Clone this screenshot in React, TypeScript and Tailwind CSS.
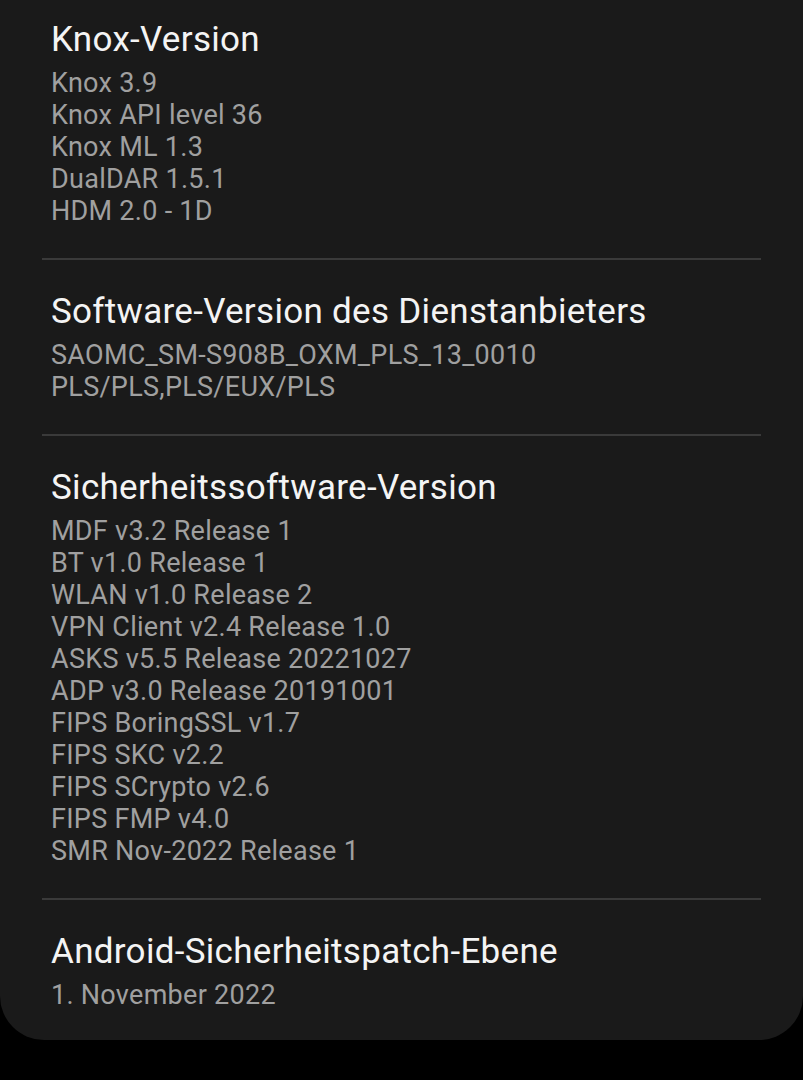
import React from "react";

const sections: { title: string; lines: string[] }[] = [
  {
    title: "Knox-Version",
    lines: ["Knox 3.9", "Knox API level 36", "Knox ML 1.3", "DualDAR 1.5.1", "HDM 2.0 - 1D"],
  },
  {
    title: "Software-Version des Dienstanbieters",
    lines: ["SAOMC_SM-S908B_OXM_PLS_13_0010", "PLS/PLS,PLS/EUX/PLS"],
  },
  {
    title: "Sicherheitssoftware-Version",
    lines: [
      "MDF v3.2 Release 1",
      "BT v1.0 Release 1",
      "WLAN v1.0 Release 2",
      "VPN Client v2.4 Release 1.0",
      "ASKS v5.5 Release 20221027",
      "ADP v3.0 Release 20191001",
      "FIPS BoringSSL v1.7",
      "FIPS SKC v2.2",
      "FIPS SCrypto v2.6",
      "FIPS FMP v4.0",
      "SMR Nov-2022 Release 1",
    ],
  },
  {
    title: "Android-Sicherheitspatch-Ebene",
    lines: ["1. November 2022"],
  },
];

export default function App() {
  return (
    <div className="w-[803px] h-[1080px] bg-black" style={{ fontFamily: "Roboto, 'Noto Sans', sans-serif" }}>
      <div className="bg-[#1a1a1a] rounded-b-[44px] flex flex-col">
        {sections.map((s, i) => (
          <div key={s.title} className="flex flex-col">
            {i > 0 && <div className="mx-[42px] h-[2px] bg-[#3a3a3a]" />}
            <div
              className={
                (i === 0 ? "pt-[18px] " : "pt-[30px] ") +
                (i === sections.length - 1 ? "pb-[29px] " : "pb-[31px] ") +
                "px-[51px] flex flex-col"
              }
            >
              <div className="text-[35px] leading-[44px] tracking-[0.3px] text-[#f4f4f4] mb-[5px] whitespace-nowrap">
                {s.title}
              </div>
              {s.lines.map((l) => (
                <div key={l} className="text-[27px] leading-[32px] tracking-[0.28px] text-[#a0a0a0] whitespace-nowrap">
                  {l}
                </div>
              ))}
            </div>
          </div>
        ))}
      </div>
    </div>
  );
}
